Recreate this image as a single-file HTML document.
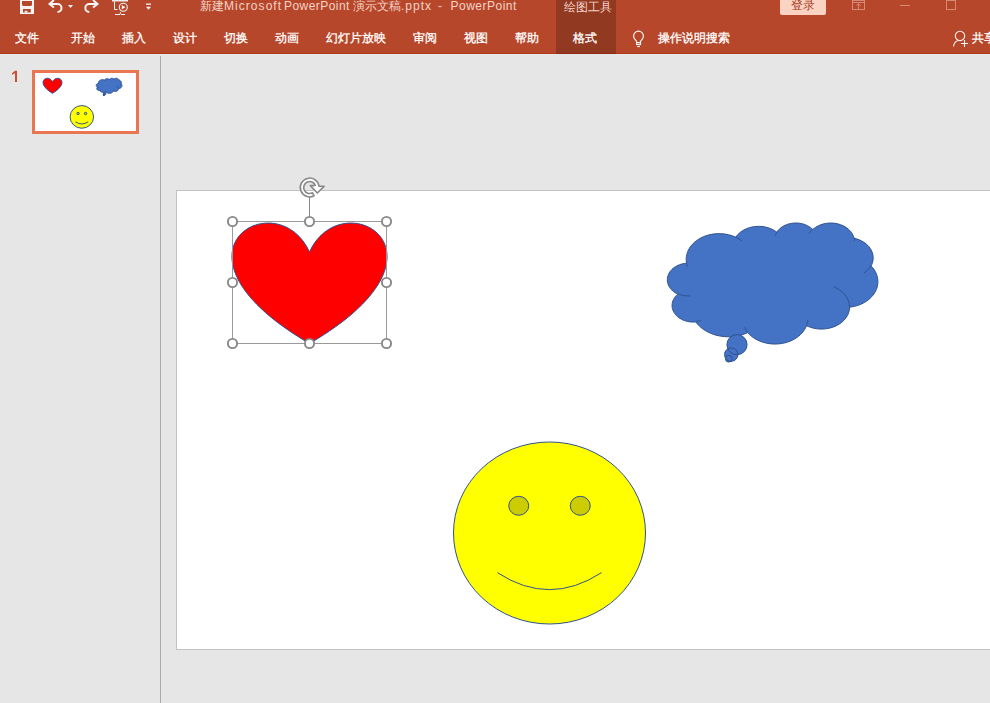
<!DOCTYPE html>
<html><head><meta charset="utf-8">
<style>
html,body{margin:0;padding:0;}
body{width:990px;height:703px;overflow:hidden;position:relative;background:#E6E6E6;font-family:"Liberation Sans",sans-serif;}
.abs{position:absolute;}
#ribbon{left:0;top:0;width:990px;height:53px;background:#B7472A;}
#ribline{left:0;top:53px;width:990px;height:1px;background:#B33B1D;}
.tab{position:absolute;top:30px;font-size:12px;-webkit-text-stroke:0.3px #fff;line-height:16px;color:#FFFFFF;white-space:nowrap;}
.tt{position:absolute;top:-2px;font-size:12px;line-height:16px;color:#F3D3C9;white-space:nowrap;}
#drawtools{left:556px;top:0;width:60px;height:53px;background:#923922;border-bottom:1px solid #8F2C16;}
#dtlabel{left:563.5px;top:-1px;font-size:12px;line-height:16px;color:#F3D3C9;white-space:nowrap;}
#login{left:780px;top:-3px;width:46px;height:18px;background:#FBD3C3;border-radius:2px;}
#logintxt{left:791px;top:-3px;font-size:12px;line-height:16px;color:#A63E24;white-space:nowrap;}
#sep{left:160px;top:56px;width:1px;height:647px;background:#ABABAB;}
#thumbnum{left:11px;top:69px;font-size:14px;line-height:16px;color:#C8573A;}
#thumb{left:32px;top:70px;width:101px;height:58px;border:3px solid #EA7651;background:#fff;overflow:hidden;}
#slide{left:176px;top:190px;width:830px;height:458px;border:1px solid #C3C3C3;background:#fff;}
svg{position:absolute;left:0;top:0;}
</style></head>
<body>
<div id="ribbon" class="abs"></div>
<div id="ribline" class="abs"></div>
<div id="drawtools" class="abs"></div>
<div class="tt" style="left:200px">新建</div>
<div class="tt" id="t_ms" style="left:224px;letter-spacing:1.05px">Microsoft</div>
<div class="tt" id="t_pp1" style="left:284px;letter-spacing:0.45px">PowerPoint</div>
<div class="tt" style="left:353px">演示文稿</div>
<div class="tt" id="t_ext" style="left:401px;letter-spacing:1.0px">.pptx</div>
<div class="tt" style="left:438px">-</div>
<div class="tt" id="t_pp2" style="left:450.5px;letter-spacing:0.5px">PowerPoint</div>
<div id="dtlabel" class="abs">绘图工具</div>
<div id="login" class="abs"></div>
<div id="logintxt" class="abs">登录</div>

<div class="tab" style="left:15px">文件</div>
<div class="tab" style="left:71px">开始</div>
<div class="tab" style="left:122px">插入</div>
<div class="tab" style="left:173px">设计</div>
<div class="tab" style="left:224px">切换</div>
<div class="tab" style="left:275px">动画</div>
<div class="tab" style="left:326px">幻灯片放映</div>
<div class="tab" style="left:413px">审阅</div>
<div class="tab" style="left:464px">视图</div>
<div class="tab" style="left:515px">帮助</div>
<div class="tab" style="left:573px">格式</div>
<div class="tab" style="left:658px">操作说明搜索</div>
<div class="tab" style="left:972px">共享</div>

<!-- top icons -->
<svg width="990" height="54" viewBox="0 0 990 54">
  <!-- save -->
  <rect x="20" y="-1" width="14" height="15" fill="#F4F4F4"/>
  <path d="M22,1 H32 V5 L31,6 H23 L22,5 Z" fill="#B7472A"/>
  <rect x="23" y="9" width="7.8" height="3.5" fill="#B7472A"/>
  <rect x="24.7" y="10.8" width="2.7" height="1.8" fill="#F4F4F4"/>
  <!-- undo -->
  <g fill="none" stroke="#F4F4F4" stroke-width="2" stroke-linecap="butt">
    <path d="M49.5,4 H57.5 A4,4 0 0 1 57.5,12"/>
    <path d="M54,0 L49.5,4 L54,7.5"/>
  </g>
  <path d="M68,5 H73 L70.5,8 Z" fill="#F4F4F4"/>
  <!-- redo -->
  <g fill="none" stroke="#F4F4F4" stroke-width="2">
    <path d="M97,4 H89.3 A4,4 0 0 0 89.3,12"/>
    <path d="M93,0 L97.5,4 L93,7.5"/>
  </g>
  <!-- from beginning -->
  <rect x="112" y="-1" width="16" height="2.5" fill="#EDEDED"/>
  <path d="M114.5,1.5 V9.5 H117.5" fill="none" stroke="#F4F4F4" stroke-width="1"/>
  <circle cx="123.3" cy="7.3" r="4" fill="none" stroke="#F4F4F4" stroke-width="1.1"/>
  <path d="M121.8,5 L125.4,7.3 L121.8,9.6 Z" fill="#F4F4F4"/>
  <path d="M115,14.5 H120 L120.5,12 M121,14.5 H125" fill="none" stroke="#F4F4F4" stroke-width="1"/>
  <!-- customize -->
  <rect x="146" y="3.5" width="5" height="1.3" fill="#F4F4F4"/>
  <path d="M146,6.8 H151 L148.5,9.8 Z" fill="#F4F4F4"/>
  <!-- ribbon display options -->
  <g fill="none" stroke="#D68A76" stroke-width="1">
    <rect x="852.5" y="0.5" width="12" height="9"/>
    <path d="M852.5,2.5 H864.5 M858.5,9.5 V4 M856.3,5.7 L858.5,3.8 L860.7,5.7"/>
    <path d="M900,5.5 H910"/>
    <rect x="946.5" y="0.5" width="9" height="9"/>
  </g>
  <!-- lightbulb -->
  <g fill="none" stroke="#F4F4F4" stroke-width="1.15">
    <path d="M636.6,42.6 V41.5 L634.4,38.6 C633.9,37.8 633.6,37 633.6,36.1 A4.9,4.9 0 0 1 643.4,36.1 C643.4,37 643.1,37.8 642.6,38.6 L640.5,41.5 V42.6"/>
    <rect x="636.6" y="42.6" width="3.9" height="1.9"/>
    <path d="M637.2,46.5 H640"/>
  </g>
  <!-- person add -->
  <g fill="none" stroke="#F4F4F4" stroke-width="1.1">
    <circle cx="960" cy="35.9" r="4.7"/>
    <path d="M953.5,46.5 C954,43 955.5,41.5 958,40.6"/>
    <path d="M964.5,40 V47 M961,43.5 H968"/>
  </g>
</svg>

<div id="sep" class="abs"></div>
<svg width="30" height="30" viewBox="0 0 30 30" style="left:0;top:60px"><path d="M15,10.8 H17 V21.9 H15 V13.2 L12,14.7 V13.3 Z" fill="#CF4E2D"/></svg>
<div id="thumb" class="abs"><svg width="101" height="58" viewBox="0 0 101 58" style="left:0;top:0"><g transform="translate(-35 -73)"><g transform="translate(36.300 74.300) scale(0.12220 0.12460) translate(-177 -191)"><path d="M309.50,252.00 C341.58,180.83 466.71,252.00 309.50,343.50 C152.29,252.00 277.42,180.83 309.50,252.00 Z" fill="#FF0000" stroke="#2F528F" stroke-width="8.00"/><path d="M686.49,262.85 L686.24,260.80 L686.20,258.75 L686.36,256.70 L686.74,254.66 L687.33,252.66 L688.11,250.70 L689.09,248.79 L690.27,246.96 L691.62,245.20 L693.16,243.53 L694.85,241.96 L696.71,240.51 L698.70,239.17 L700.82,237.96 L703.06,236.89 L705.41,235.96 L707.84,235.19 L710.34,234.56 L712.89,234.10 L715.49,233.79 L718.11,233.65 L720.73,233.67 L723.34,233.86 L725.93,234.21 L728.47,234.72 L730.96,235.38 L733.36,236.20 L735.68,237.17 L736.74,235.75 L737.94,234.40 L739.27,233.13 L740.74,231.95 L742.32,230.87 L744.00,229.89 L745.79,229.02 L747.65,228.26 L749.59,227.63 L751.59,227.12 L753.63,226.74 L755.70,226.49 L757.80,226.37 L759.89,226.39 L761.98,226.54 L764.05,226.82 L766.09,227.23 L768.07,227.77 L769.99,228.43 L771.84,229.21 L773.60,230.10 L775.26,231.11 L776.82,232.21 L777.65,231.03 L778.60,229.90 L779.66,228.84 L780.83,227.85 L782.10,226.94 L783.46,226.11 L784.90,225.37 L786.41,224.72 L787.98,224.17 L789.61,223.72 L791.28,223.38 L792.97,223.15 L794.69,223.02 L796.41,223.00 L798.13,223.09 L799.83,223.29 L801.51,223.60 L803.15,224.01 L804.74,224.53 L806.28,225.14 L807.74,225.86 L809.13,226.66 L810.43,227.54 L811.63,228.51 L812.73,229.55 L814.02,228.45 L815.42,227.44 L816.92,226.52 L818.51,225.69 L820.18,224.97 L821.92,224.36 L823.72,223.86 L825.56,223.47 L827.44,223.20 L829.34,223.05 L831.24,223.02 L833.15,223.11 L835.04,223.32 L836.90,223.65 L838.72,224.10 L840.49,224.66 L842.20,225.32 L843.83,226.10 L845.37,226.97 L846.83,227.94 L848.17,228.99 L849.41,230.13 L850.52,231.34 L851.50,232.62 L852.35,233.95 L853.06,235.34 L853.62,236.76 L854.03,238.22 L856.05,238.72 L858.01,239.35 L859.89,240.10 L861.69,240.96 L863.40,241.94 L864.99,243.03 L866.47,244.21 L867.83,245.49 L869.04,246.84 L870.11,248.27 L871.03,249.77 L871.79,251.31 L872.39,252.91 L872.82,254.53 L873.08,256.17 L873.18,257.83 L873.09,259.49 L872.84,261.13 L872.42,262.76 L871.83,264.35 L871.07,265.90 L872.60,267.59 L873.95,269.37 L875.11,271.23 L876.07,273.16 L876.84,275.14 L877.40,277.16 L877.75,279.21 L877.90,281.28 L877.83,283.34 L877.55,285.40 L877.06,287.43 L876.36,289.43 L875.46,291.38 L874.37,293.26 L873.08,295.07 L871.62,296.79 L869.98,298.42 L868.19,299.93 L866.24,301.33 L864.16,302.61 L861.95,303.75 L859.64,304.74 L857.23,305.59 L854.74,306.29 L852.19,306.82 L849.59,307.20 L849.48,308.92 L849.20,310.64 L848.76,312.34 L848.14,314.00 L847.36,315.62 L846.41,317.18 L845.32,318.68 L844.07,320.12 L842.69,321.47 L841.18,322.73 L839.54,323.89 L837.79,324.95 L835.94,325.90 L834.01,326.73 L831.99,327.45 L829.91,328.03 L827.78,328.49 L825.60,328.81 L823.40,329.00 L821.19,329.05 L818.98,328.97 L816.79,328.75 L814.63,328.40 L812.50,327.92 L810.43,327.31 L808.43,326.57 L806.51,325.71 L805.64,327.68 L804.57,329.58 L803.31,331.41 L801.87,333.16 L800.25,334.81 L798.47,336.35 L796.53,337.77 L794.46,339.06 L792.26,340.22 L789.95,341.24 L787.54,342.11 L785.05,342.82 L782.49,343.37 L779.89,343.76 L777.25,343.98 L774.60,344.04 L771.96,343.93 L769.33,343.65 L766.74,343.20 L764.21,342.60 L761.74,341.83 L759.36,340.91 L757.09,339.85 L754.93,338.64 L752.90,337.30 L751.02,335.84 L749.29,334.26 L747.73,332.58 L745.11,333.71 L742.38,334.67 L739.56,335.46 L736.67,336.07 L733.73,336.49 L730.76,336.74 L727.77,336.79 L724.78,336.66 L721.82,336.35 L718.90,335.84 L716.04,335.16 L713.26,334.30 L710.57,333.28 L707.99,332.08 L705.55,330.73 L703.25,329.23 L701.10,327.59 L699.13,325.82 L697.35,323.94 L695.76,321.95 L694.09,322.05 L692.42,322.05 L690.76,321.94 L689.11,321.74 L687.49,321.43 L685.90,321.03 L684.36,320.52 L682.87,319.93 L681.45,319.25 L680.10,318.48 L678.83,317.63 L677.66,316.70 L676.57,315.71 L675.60,314.65 L674.73,313.53 L673.98,312.37 L673.34,311.16 L672.83,309.92 L672.45,308.65 L672.20,307.36 L672.07,306.06 L672.08,304.76 L672.22,303.46 L672.49,302.17 L672.89,300.90 L673.41,299.67 L674.06,298.46 L674.83,297.30 L675.71,296.20 L676.70,295.15 L677.79,294.16 L676.35,293.43 L674.99,292.61 L673.71,291.71 L672.54,290.74 L671.47,289.68 L670.51,288.57 L669.66,287.40 L668.94,286.17 L668.35,284.91 L667.89,283.61 L667.57,282.29 L667.38,280.95 L667.33,279.60 L667.42,278.26 L667.64,276.92 L668.00,275.61 L668.50,274.32 L669.13,273.06 L669.88,271.85 L670.76,270.70 L671.75,269.60 L672.85,268.57 L674.06,267.61 L675.35,266.73 L676.74,265.94 L678.20,265.24 L679.73,264.63 L681.31,264.12 L682.95,263.72 L684.61,263.42 L686.31,263.23 Z" fill="#4472C4" stroke="#2F528F" stroke-width="8.00"/><circle cx="728.84" cy="358.73" r="3.36" fill="#4472C4"/><circle cx="731.24" cy="354.59" r="6.72" fill="#4472C4"/><circle cx="737.00" cy="344.63" r="10.08" fill="#4472C4"/><circle cx="728.84" cy="358.73" r="3.36" fill="none" stroke="#2F528F" stroke-width="8.00"/><circle cx="731.24" cy="354.59" r="6.72" fill="none" stroke="#2F528F" stroke-width="8.00"/><circle cx="737.00" cy="344.63" r="10.08" fill="none" stroke="#2F528F" stroke-width="8.00"/><path d="M690.35,295.92 L688.74,295.97 L687.14,295.92 L685.54,295.78 L683.96,295.55 L682.41,295.22 L680.90,294.80 L679.43,294.28 L678.01,293.69 M701.23,320.35 L700.57,320.54 L699.91,320.72 L699.25,320.88 L698.57,321.02 L697.89,321.15 L697.21,321.26 L696.52,321.35 L695.83,321.42 M747.72,332.09 L747.24,331.51 L746.78,330.92 L746.34,330.33 L745.92,329.72 L745.53,329.11 L745.15,328.48 L744.80,327.85 L744.47,327.21 M807.83,319.93 L807.75,320.61 L807.64,321.29 L807.51,321.96 L807.36,322.64 L807.19,323.30 L806.99,323.97 L806.77,324.63 L806.53,325.28 M833.64,286.89 L835.64,287.73 L837.54,288.69 L839.33,289.77 L841.01,290.96 L842.56,292.25 L843.98,293.63 L845.25,295.10 L846.36,296.64 L847.31,298.24 L848.10,299.91 L848.71,301.61 L849.14,303.35 L849.40,305.11 L849.47,306.88 M870.97,265.61 L870.35,266.67 L869.64,267.71 L868.86,268.71 L868.00,269.67 L867.08,270.60 L866.09,271.48 L865.04,272.31 L863.93,273.10 M854.06,237.80 L854.16,238.24 L854.24,238.68 L854.31,239.12 L854.36,239.56 L854.40,240.00 L854.42,240.45 L854.44,240.89 L854.44,241.34 M809.05,233.67 L809.41,233.06 L809.80,232.47 L810.21,231.88 L810.65,231.31 L811.12,230.75 L811.61,230.20 L812.12,229.67 L812.66,229.16 M775.28,235.82 L775.43,235.32 L775.60,234.82 L775.79,234.32 L776.00,233.83 L776.23,233.35 L776.48,232.87 L776.75,232.39 L777.03,231.93 M735.65,237.14 L736.51,237.55 L737.34,237.97 L738.16,238.42 L738.96,238.88 L739.75,239.36 L740.51,239.86 L741.26,240.38 L741.98,240.92 M687.59,266.82 L687.41,266.34 L687.24,265.84 L687.08,265.35 L686.94,264.85 L686.81,264.36 L686.69,263.86 L686.58,263.35 L686.49,262.85 " fill="none" stroke="#2F528F" stroke-width="8.00"/><ellipse cx="549.50" cy="533.00" rx="96.00" ry="91.00" fill="#FFFF00" stroke="#2F528F" stroke-width="8.00"/><ellipse cx="518.74" cy="505.78" rx="10.00" ry="9.48" fill="#CCCC00" stroke="#2F528F" stroke-width="8.00"/><ellipse cx="580.26" cy="505.78" rx="10.00" ry="9.48" fill="#CCCC00" stroke="#2F528F" stroke-width="8.00"/><path d="M497.47,572.69 Q549.50,606.56 601.41,572.69" fill="none" stroke="#2F528F" stroke-width="8.00"/></g></g></svg></div>
<div id="slide" class="abs"></div>
<svg width="990" height="703" viewBox="0 0 990 703" style="left:0;top:0">
<path d="M309.50,252.00 C341.58,180.83 466.71,252.00 309.50,343.50 C152.29,252.00 277.42,180.83 309.50,252.00 Z" fill="#FF0000" stroke="#2F528F" stroke-width="1.00"/><path d="M686.49,262.85 L686.24,260.80 L686.20,258.75 L686.36,256.70 L686.74,254.66 L687.33,252.66 L688.11,250.70 L689.09,248.79 L690.27,246.96 L691.62,245.20 L693.16,243.53 L694.85,241.96 L696.71,240.51 L698.70,239.17 L700.82,237.96 L703.06,236.89 L705.41,235.96 L707.84,235.19 L710.34,234.56 L712.89,234.10 L715.49,233.79 L718.11,233.65 L720.73,233.67 L723.34,233.86 L725.93,234.21 L728.47,234.72 L730.96,235.38 L733.36,236.20 L735.68,237.17 L736.74,235.75 L737.94,234.40 L739.27,233.13 L740.74,231.95 L742.32,230.87 L744.00,229.89 L745.79,229.02 L747.65,228.26 L749.59,227.63 L751.59,227.12 L753.63,226.74 L755.70,226.49 L757.80,226.37 L759.89,226.39 L761.98,226.54 L764.05,226.82 L766.09,227.23 L768.07,227.77 L769.99,228.43 L771.84,229.21 L773.60,230.10 L775.26,231.11 L776.82,232.21 L777.65,231.03 L778.60,229.90 L779.66,228.84 L780.83,227.85 L782.10,226.94 L783.46,226.11 L784.90,225.37 L786.41,224.72 L787.98,224.17 L789.61,223.72 L791.28,223.38 L792.97,223.15 L794.69,223.02 L796.41,223.00 L798.13,223.09 L799.83,223.29 L801.51,223.60 L803.15,224.01 L804.74,224.53 L806.28,225.14 L807.74,225.86 L809.13,226.66 L810.43,227.54 L811.63,228.51 L812.73,229.55 L814.02,228.45 L815.42,227.44 L816.92,226.52 L818.51,225.69 L820.18,224.97 L821.92,224.36 L823.72,223.86 L825.56,223.47 L827.44,223.20 L829.34,223.05 L831.24,223.02 L833.15,223.11 L835.04,223.32 L836.90,223.65 L838.72,224.10 L840.49,224.66 L842.20,225.32 L843.83,226.10 L845.37,226.97 L846.83,227.94 L848.17,228.99 L849.41,230.13 L850.52,231.34 L851.50,232.62 L852.35,233.95 L853.06,235.34 L853.62,236.76 L854.03,238.22 L856.05,238.72 L858.01,239.35 L859.89,240.10 L861.69,240.96 L863.40,241.94 L864.99,243.03 L866.47,244.21 L867.83,245.49 L869.04,246.84 L870.11,248.27 L871.03,249.77 L871.79,251.31 L872.39,252.91 L872.82,254.53 L873.08,256.17 L873.18,257.83 L873.09,259.49 L872.84,261.13 L872.42,262.76 L871.83,264.35 L871.07,265.90 L872.60,267.59 L873.95,269.37 L875.11,271.23 L876.07,273.16 L876.84,275.14 L877.40,277.16 L877.75,279.21 L877.90,281.28 L877.83,283.34 L877.55,285.40 L877.06,287.43 L876.36,289.43 L875.46,291.38 L874.37,293.26 L873.08,295.07 L871.62,296.79 L869.98,298.42 L868.19,299.93 L866.24,301.33 L864.16,302.61 L861.95,303.75 L859.64,304.74 L857.23,305.59 L854.74,306.29 L852.19,306.82 L849.59,307.20 L849.48,308.92 L849.20,310.64 L848.76,312.34 L848.14,314.00 L847.36,315.62 L846.41,317.18 L845.32,318.68 L844.07,320.12 L842.69,321.47 L841.18,322.73 L839.54,323.89 L837.79,324.95 L835.94,325.90 L834.01,326.73 L831.99,327.45 L829.91,328.03 L827.78,328.49 L825.60,328.81 L823.40,329.00 L821.19,329.05 L818.98,328.97 L816.79,328.75 L814.63,328.40 L812.50,327.92 L810.43,327.31 L808.43,326.57 L806.51,325.71 L805.64,327.68 L804.57,329.58 L803.31,331.41 L801.87,333.16 L800.25,334.81 L798.47,336.35 L796.53,337.77 L794.46,339.06 L792.26,340.22 L789.95,341.24 L787.54,342.11 L785.05,342.82 L782.49,343.37 L779.89,343.76 L777.25,343.98 L774.60,344.04 L771.96,343.93 L769.33,343.65 L766.74,343.20 L764.21,342.60 L761.74,341.83 L759.36,340.91 L757.09,339.85 L754.93,338.64 L752.90,337.30 L751.02,335.84 L749.29,334.26 L747.73,332.58 L745.11,333.71 L742.38,334.67 L739.56,335.46 L736.67,336.07 L733.73,336.49 L730.76,336.74 L727.77,336.79 L724.78,336.66 L721.82,336.35 L718.90,335.84 L716.04,335.16 L713.26,334.30 L710.57,333.28 L707.99,332.08 L705.55,330.73 L703.25,329.23 L701.10,327.59 L699.13,325.82 L697.35,323.94 L695.76,321.95 L694.09,322.05 L692.42,322.05 L690.76,321.94 L689.11,321.74 L687.49,321.43 L685.90,321.03 L684.36,320.52 L682.87,319.93 L681.45,319.25 L680.10,318.48 L678.83,317.63 L677.66,316.70 L676.57,315.71 L675.60,314.65 L674.73,313.53 L673.98,312.37 L673.34,311.16 L672.83,309.92 L672.45,308.65 L672.20,307.36 L672.07,306.06 L672.08,304.76 L672.22,303.46 L672.49,302.17 L672.89,300.90 L673.41,299.67 L674.06,298.46 L674.83,297.30 L675.71,296.20 L676.70,295.15 L677.79,294.16 L676.35,293.43 L674.99,292.61 L673.71,291.71 L672.54,290.74 L671.47,289.68 L670.51,288.57 L669.66,287.40 L668.94,286.17 L668.35,284.91 L667.89,283.61 L667.57,282.29 L667.38,280.95 L667.33,279.60 L667.42,278.26 L667.64,276.92 L668.00,275.61 L668.50,274.32 L669.13,273.06 L669.88,271.85 L670.76,270.70 L671.75,269.60 L672.85,268.57 L674.06,267.61 L675.35,266.73 L676.74,265.94 L678.20,265.24 L679.73,264.63 L681.31,264.12 L682.95,263.72 L684.61,263.42 L686.31,263.23 Z" fill="#4472C4" stroke="#2F528F" stroke-width="1.00"/><circle cx="728.84" cy="358.73" r="3.36" fill="#4472C4"/><circle cx="731.24" cy="354.59" r="6.72" fill="#4472C4"/><circle cx="737.00" cy="344.63" r="10.08" fill="#4472C4"/><circle cx="728.84" cy="358.73" r="3.36" fill="none" stroke="#2F528F" stroke-width="1.00"/><circle cx="731.24" cy="354.59" r="6.72" fill="none" stroke="#2F528F" stroke-width="1.00"/><circle cx="737.00" cy="344.63" r="10.08" fill="none" stroke="#2F528F" stroke-width="1.00"/><path d="M690.35,295.92 L688.74,295.97 L687.14,295.92 L685.54,295.78 L683.96,295.55 L682.41,295.22 L680.90,294.80 L679.43,294.28 L678.01,293.69 M701.23,320.35 L700.57,320.54 L699.91,320.72 L699.25,320.88 L698.57,321.02 L697.89,321.15 L697.21,321.26 L696.52,321.35 L695.83,321.42 M747.72,332.09 L747.24,331.51 L746.78,330.92 L746.34,330.33 L745.92,329.72 L745.53,329.11 L745.15,328.48 L744.80,327.85 L744.47,327.21 M807.83,319.93 L807.75,320.61 L807.64,321.29 L807.51,321.96 L807.36,322.64 L807.19,323.30 L806.99,323.97 L806.77,324.63 L806.53,325.28 M833.64,286.89 L835.64,287.73 L837.54,288.69 L839.33,289.77 L841.01,290.96 L842.56,292.25 L843.98,293.63 L845.25,295.10 L846.36,296.64 L847.31,298.24 L848.10,299.91 L848.71,301.61 L849.14,303.35 L849.40,305.11 L849.47,306.88 M870.97,265.61 L870.35,266.67 L869.64,267.71 L868.86,268.71 L868.00,269.67 L867.08,270.60 L866.09,271.48 L865.04,272.31 L863.93,273.10 M854.06,237.80 L854.16,238.24 L854.24,238.68 L854.31,239.12 L854.36,239.56 L854.40,240.00 L854.42,240.45 L854.44,240.89 L854.44,241.34 M809.05,233.67 L809.41,233.06 L809.80,232.47 L810.21,231.88 L810.65,231.31 L811.12,230.75 L811.61,230.20 L812.12,229.67 L812.66,229.16 M775.28,235.82 L775.43,235.32 L775.60,234.82 L775.79,234.32 L776.00,233.83 L776.23,233.35 L776.48,232.87 L776.75,232.39 L777.03,231.93 M735.65,237.14 L736.51,237.55 L737.34,237.97 L738.16,238.42 L738.96,238.88 L739.75,239.36 L740.51,239.86 L741.26,240.38 L741.98,240.92 M687.59,266.82 L687.41,266.34 L687.24,265.84 L687.08,265.35 L686.94,264.85 L686.81,264.36 L686.69,263.86 L686.58,263.35 L686.49,262.85 " fill="none" stroke="#2F528F" stroke-width="1.00"/><ellipse cx="549.50" cy="533.00" rx="96.00" ry="91.00" fill="#FFFF00" stroke="#2F528F" stroke-width="1.00"/><ellipse cx="518.74" cy="505.78" rx="10.00" ry="9.48" fill="#CCCC00" stroke="#2F528F" stroke-width="1.00"/><ellipse cx="580.26" cy="505.78" rx="10.00" ry="9.48" fill="#CCCC00" stroke="#2F528F" stroke-width="1.00"/><path d="M497.47,572.69 Q549.50,606.56 601.41,572.69" fill="none" stroke="#2F528F" stroke-width="1.00"/><rect x="232.5" y="221.5" width="154.0" height="122.0" fill="none" stroke="#9A9A9A" stroke-width="1"/><line x1="309.5" y1="197" x2="309.5" y2="216" stroke="#8A8A8A" stroke-width="1"/><circle cx="232.5" cy="221.5" r="4.6" fill="#fff" stroke="#888888" stroke-width="1.9"/><circle cx="232.5" cy="282.5" r="4.6" fill="#fff" stroke="#888888" stroke-width="1.9"/><circle cx="232.5" cy="343.5" r="4.6" fill="#fff" stroke="#888888" stroke-width="1.9"/><circle cx="309.5" cy="221.5" r="4.6" fill="#fff" stroke="#888888" stroke-width="1.9"/><circle cx="309.5" cy="343.5" r="4.6" fill="#fff" stroke="#888888" stroke-width="1.9"/><circle cx="386.5" cy="221.5" r="4.6" fill="#fff" stroke="#888888" stroke-width="1.9"/><circle cx="386.5" cy="282.5" r="4.6" fill="#fff" stroke="#888888" stroke-width="1.9"/><circle cx="386.5" cy="343.5" r="4.6" fill="#fff" stroke="#888888" stroke-width="1.9"/><path d="M314.11,195.80 A9.40,9.40 0 1 1 319.01,186.19 L324.1,186.4 L317.3,193 L310.3,185.6 L315.34,185.45 A6.00,6.00 0 1 0 312.52,192.80 Z" fill="#FFFFFF" stroke="#888888" stroke-width="1.6" stroke-linejoin="round"/>
</svg>
</body></html>
